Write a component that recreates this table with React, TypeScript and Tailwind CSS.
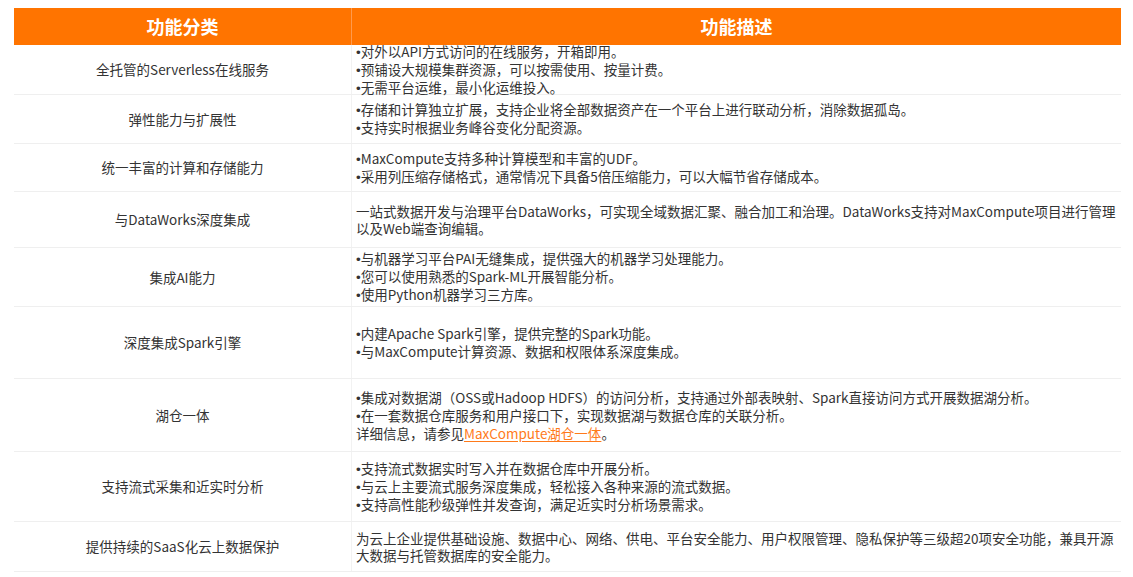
const B = () => <span className="font-['Liberation_Sans',sans-serif]">•</span>

const rows: { name: string; h: string; lines: React.ReactNode[] }[] = [
  {
    name: "全托管的Serverless在线服务",
    h: "h-[50px]",
    lines: [
      <><B />对外以API方式访问的在线服务，开箱即用。</>,
      <><B />预铺设大规模集群资源，可以按需使用、按量计费。</>,
      <><B />无需平台运维，最小化运维投入。</>,
    ],
  },
  {
    name: "弹性能力与扩展性",
    h: "h-[49px]",
    lines: [
      <><B />存储和计算独立扩展，支持企业将全部数据资产在一个平台上进行联动分析，消除数据孤岛。</>,
      <><B />支持实时根据业务峰谷变化分配资源。</>,
    ],
  },
  {
    name: "统一丰富的计算和存储能力",
    h: "h-[48px]",
    lines: [
      <><B />MaxCompute支持多种计算模型和丰富的UDF。</>,
      <><B />采用列压缩存储格式，通常情况下具备5倍压缩能力，可以大幅节省存储成本。</>,
    ],
  },
  {
    name: "与DataWorks深度集成",
    h: "h-[56px]",
    lines: [
      "一站式数据开发与治理平台DataWorks，可实现全域数据汇聚、融合加工和治理。DataWorks支持对MaxCompute项目进行管理以及Web端查询编辑。",
    ],
  },
  {
    name: "集成AI能力",
    h: "h-[59px]",
    lines: [
      <><B />与机器学习平台PAI无缝集成，提供强大的机器学习处理能力。</>,
      <><B />您可以使用熟悉的Spark-ML开展智能分析。</>,
      <><B />使用Python机器学习三方库。</>,
    ],
  },
  {
    name: "深度集成Spark引擎",
    h: "h-[72px]",
    lines: [
      <><B />内建Apache Spark引擎，提供完整的Spark功能。</>,
      <><B />与MaxCompute计算资源、数据和权限体系深度集成。</>,
    ],
  },
  {
    name: "湖仓一体",
    h: "h-[73px]",
    lines: [
      <><B />集成对数据湖（OSS或Hadoop HDFS）的访问分析，支持通过外部表映射、Spark直接访问方式开展数据湖分析。</>,
      <><B />在一套数据仓库服务和用户接口下，实现数据湖与数据仓库的关联分析。</>,
      <>
        详细信息，请参见
        <a href="#" className="text-[#ff7a1a] underline underline-offset-2">
          MaxCompute湖仓一体
        </a>
        。
      </>,
    ],
  },
  {
    name: "支持流式采集和近实时分析",
    h: "h-[70px]",
    lines: [
      <><B />支持流式数据实时写入并在数据仓库中开展分析。</>,
      <><B />与云上主要流式服务深度集成，轻松接入各种来源的流式数据。</>,
      <><B />支持高性能秒级弹性并发查询，满足近实时分析场景需求。</>,
    ],
  },
  {
    name: "提供持续的SaaS化云上数据保护",
    h: "h-[50px]",
    lines: [
      "为云上企业提供基础设施、数据中心、网络、供电、平台安全能力、用户权限管理、隐私保护等三级超20项安全功能，兼具开源大数据与托管数据库的安全能力。",
    ],
  },
]

export default function App() {
  return (
    <div className="min-h-[577px] bg-white pt-[8px] pl-[14px] font-['Noto_Sans_CJK_SC',sans-serif] text-[#333]">
      <div className="w-[1107px]">
        <div className="flex h-[37px] bg-[#ff7400] text-[18px] font-bold text-white">
          <div className="flex w-[338px] items-center justify-center border-r border-[#ff9a4d]">功能分类</div>
          <div className="flex flex-1 items-center justify-center">功能描述</div>
        </div>
        {rows.map((r) => (
          <div key={r.name} className={`flex border-b border-[#efefef] ${r.h}`}>
            <div className="flex w-[338px] shrink-0 items-center justify-center border-r border-[#f2f2f2] text-[13.5px]">
              {r.name}
            </div>
            <div className="flex flex-1 flex-col justify-center pl-[4px] pr-[4px] text-[13.5px] leading-[17px]">
              {r.lines.map((l, i) => (
                <div key={i}>{l}</div>
              ))}
            </div>
          </div>
        ))}
      </div>
    </div>
  )
}
